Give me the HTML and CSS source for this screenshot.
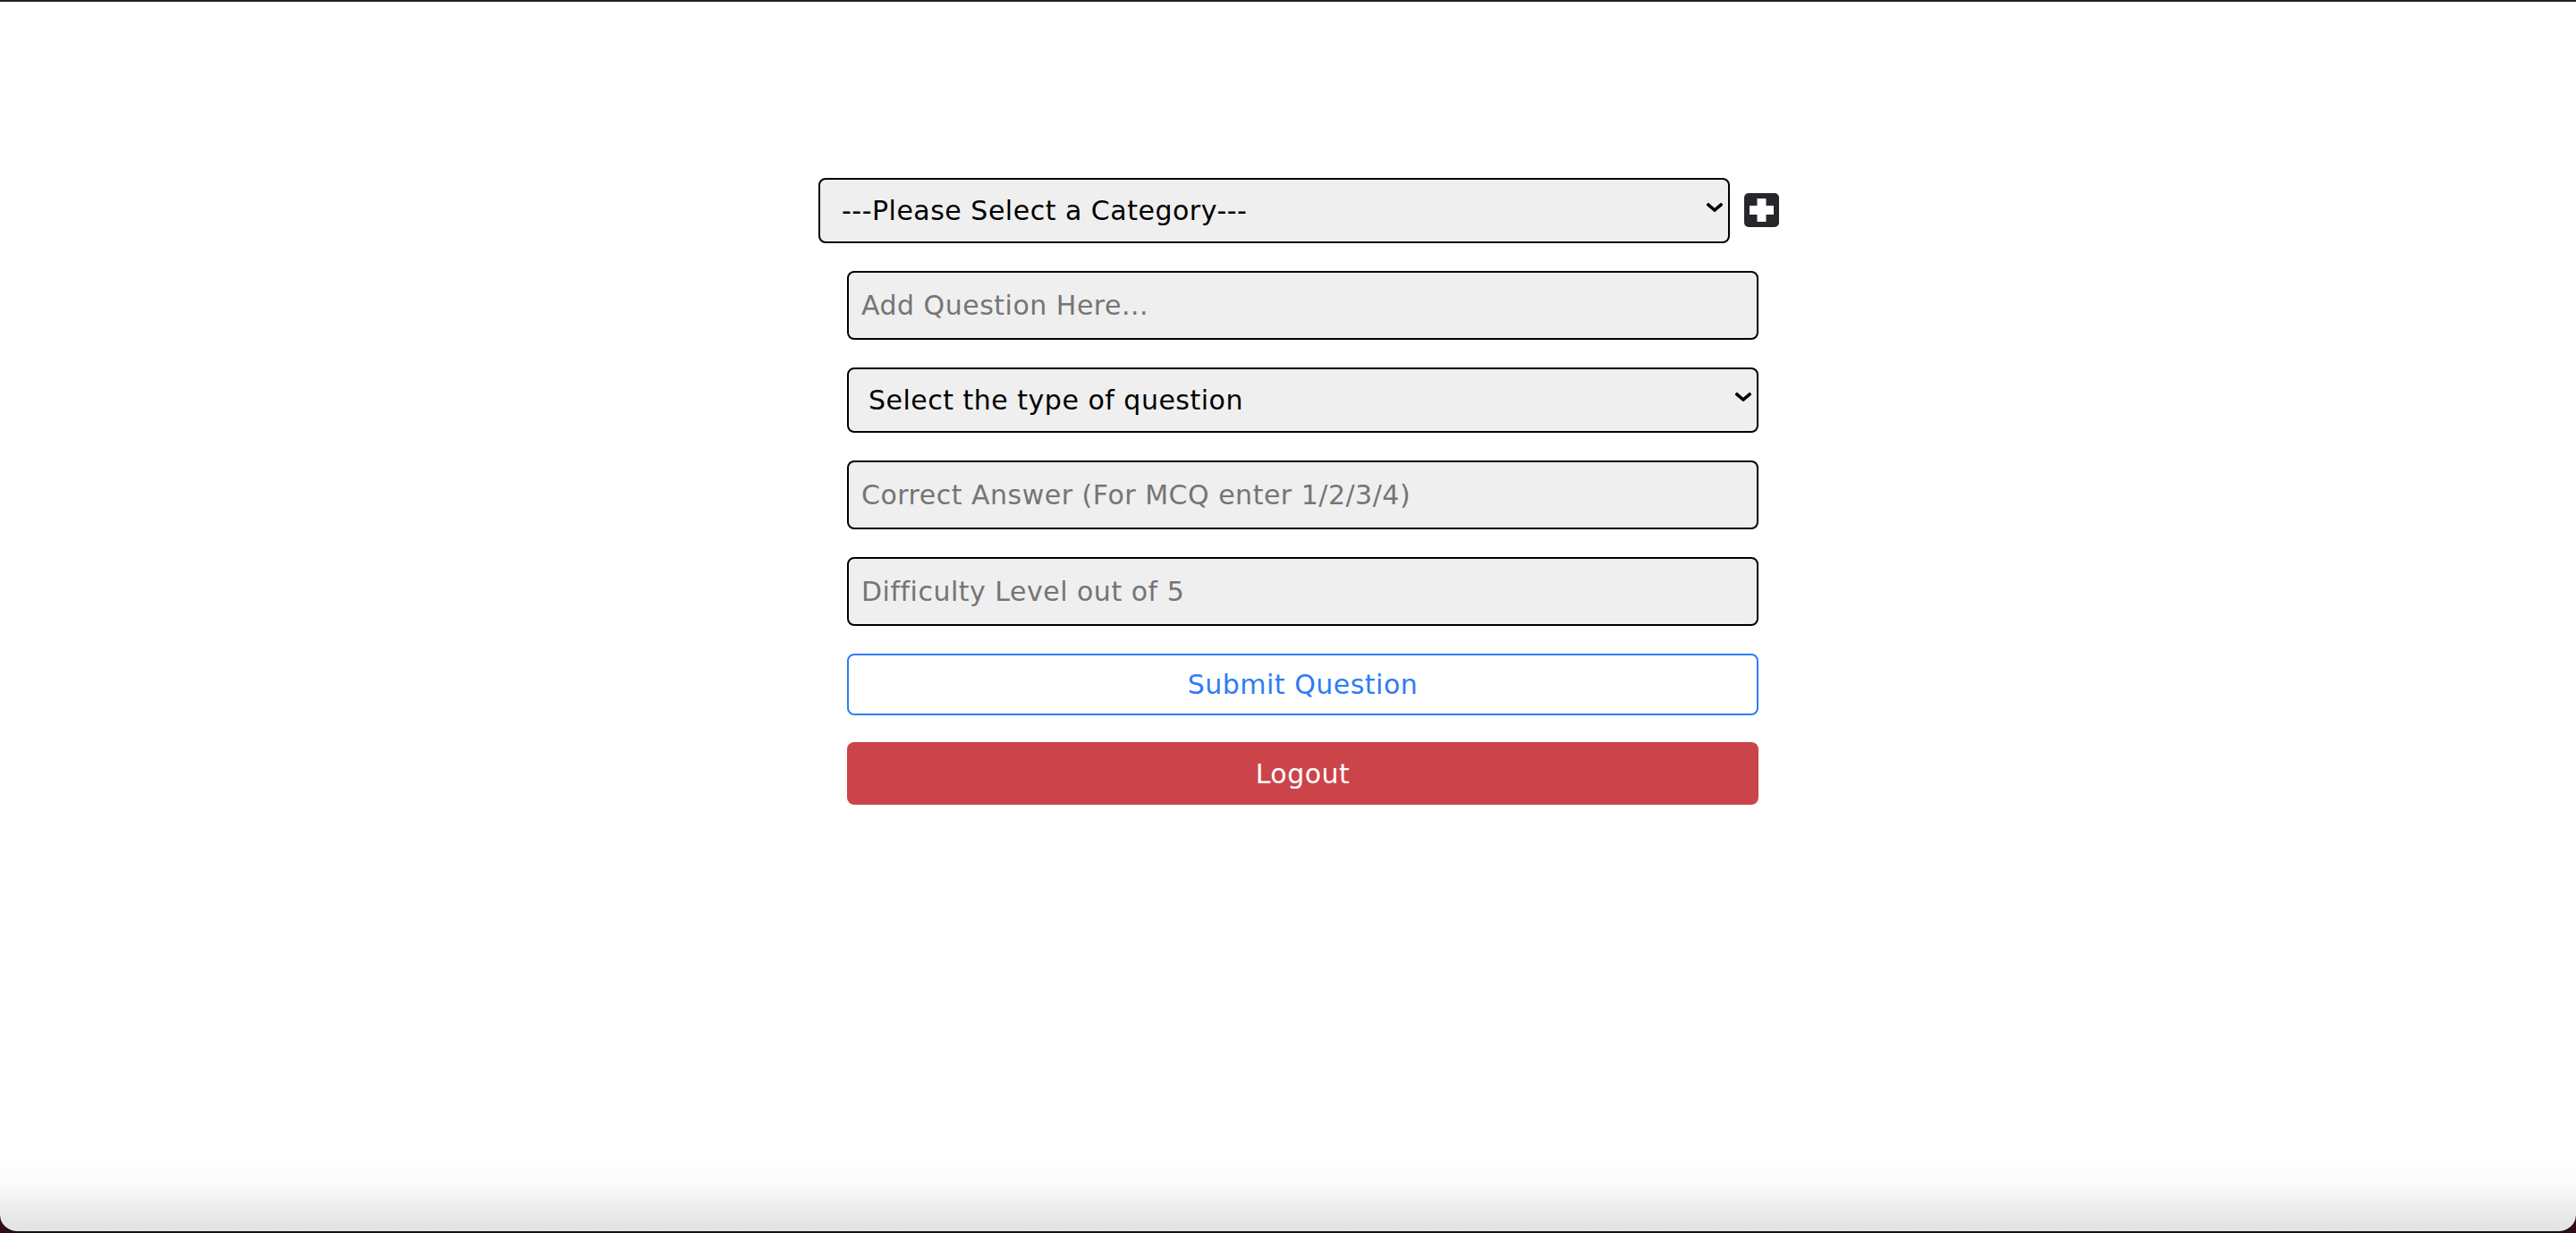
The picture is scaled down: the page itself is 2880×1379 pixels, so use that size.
FILE: index.html
```html
<!DOCTYPE html>
<html lang="en">
<head>
<meta charset="utf-8">
<title>Add Question</title>
<link rel="stylesheet" href="styles.css">
</head>
<body>
<div class="window">
  <form class="form" onsubmit="return false">
    <div class="category-row">
      <div class="select-wrap select-wrap--wide">
        <select class="field field--select">
          <option>---Please Select a Category---</option>
        </select>
        <svg class="chevron" viewBox="0 0 18 10" width="18" height="10" aria-hidden="true"><path d="M2 2 L9 8 L16 2" fill="none" stroke="#000" stroke-width="3.6" stroke-linecap="square"/></svg>
      </div>
      <button type="button" class="plus-btn" aria-label="Add category">
        <svg viewBox="0 0 39 38" width="39" height="38" aria-hidden="true">
          <rect x="0" y="0" width="39" height="38" rx="5" fill="#25272b"/>
          <rect x="6" y="14" width="27" height="10" fill="#fff"/>
          <rect x="14.5" y="6" width="10" height="26" fill="#fff"/>
        </svg>
      </button>
    </div>
    <input class="field field--input" type="text" placeholder="Add Question Here...">
    <div class="select-wrap">
      <select class="field field--select field--select2">
        <option>Select the type of question</option>
      </select>
      <svg class="chevron" viewBox="0 0 18 10" width="18" height="10" aria-hidden="true"><path d="M2 2 L9 8 L16 2" fill="none" stroke="#000" stroke-width="3.6" stroke-linecap="square"/></svg>
    </div>
    <input class="field field--input" type="text" placeholder="Correct Answer (For MCQ enter 1/2/3/4)">
    <input class="field field--input" type="text" placeholder="Difficulty Level out of 5">
    <button type="submit" class="btn btn--outline">Submit Question</button>
    <button type="button" class="btn btn--danger">Logout</button>
  </form>
</div>
</body>
</html>
```
FILE: styles.css
```css
* { box-sizing: border-box; }

html {
  background: #3a0a12;
  height: 100%;
}

body {
  margin: 0;
  height: 100%;
  font-family: "DejaVu Sans", Verdana, sans-serif;
}

.window {
  height: 1379px;
  border-top: 2px solid #232323;
  border-bottom: 2px solid #111;
  border-radius: 0 0 20px 20px;
  background: linear-gradient(to bottom, #ffffff 0, #ffffff calc(100% - 84px), #fbfbfb calc(100% - 56px), #e2e2e2 100%);
  padding-top: 197px;
  overflow: hidden;
}

.form {
  width: 1019px;
  margin-left: calc(50% - 493px);
  display: flex;
  flex-direction: column;
  gap: 31px;
}

.category-row {
  display: flex;
  align-items: center;
  gap: 16px;
  margin-left: -32px;
  width: 1074px;
}

.select-wrap {
  position: relative;
  width: 1019px;
  flex: none;
}

.field {
  display: block;
  width: 1019px;
  margin: 0;
  font-family: "DejaVu Sans", Verdana, sans-serif;
  font-size: 30px;
  letter-spacing: 0.5px;
  color: #000;
  background: #efefef;
  border: 2px solid #000;
  border-radius: 8px;
  outline: none;
}

.field--select {
  -webkit-appearance: none;
  appearance: none;
  height: 73px;
  padding: 0 40px 0 24px;
}

.field--select2 {
  padding-left: 22px;
}

.field--input {
  height: 77px;
  padding: 0 14px;
}

.field--input::placeholder {
  color: #757575;
  opacity: 1;
}

.chevron {
  position: absolute;
  right: 8px;
  top: 28px;
  pointer-events: none;
}

.plus-btn {
  padding: 0;
  margin: 0;
  border: 0;
  background: none;
  width: 39px;
  height: 38px;
  display: block;
  margin-top: -2px;
}

.plus-btn svg { display: block; }

.btn {
  display: block;
  width: 1019px;
  margin: 0;
  font-family: "DejaVu Sans", Verdana, sans-serif;
  font-size: 30px;
  letter-spacing: 0.5px;
  border-radius: 8px;
  text-align: center;
  cursor: pointer;
}

.btn--outline {
  height: 69px;
  background: #fff;
  color: #2f7cf6;
  border: 2px solid #2f7cf6;
}

.btn--danger {
  height: 70px;
  margin-top: -1px;
  background: #cb444a;
  color: #fff;
  border: 0;
}
```
